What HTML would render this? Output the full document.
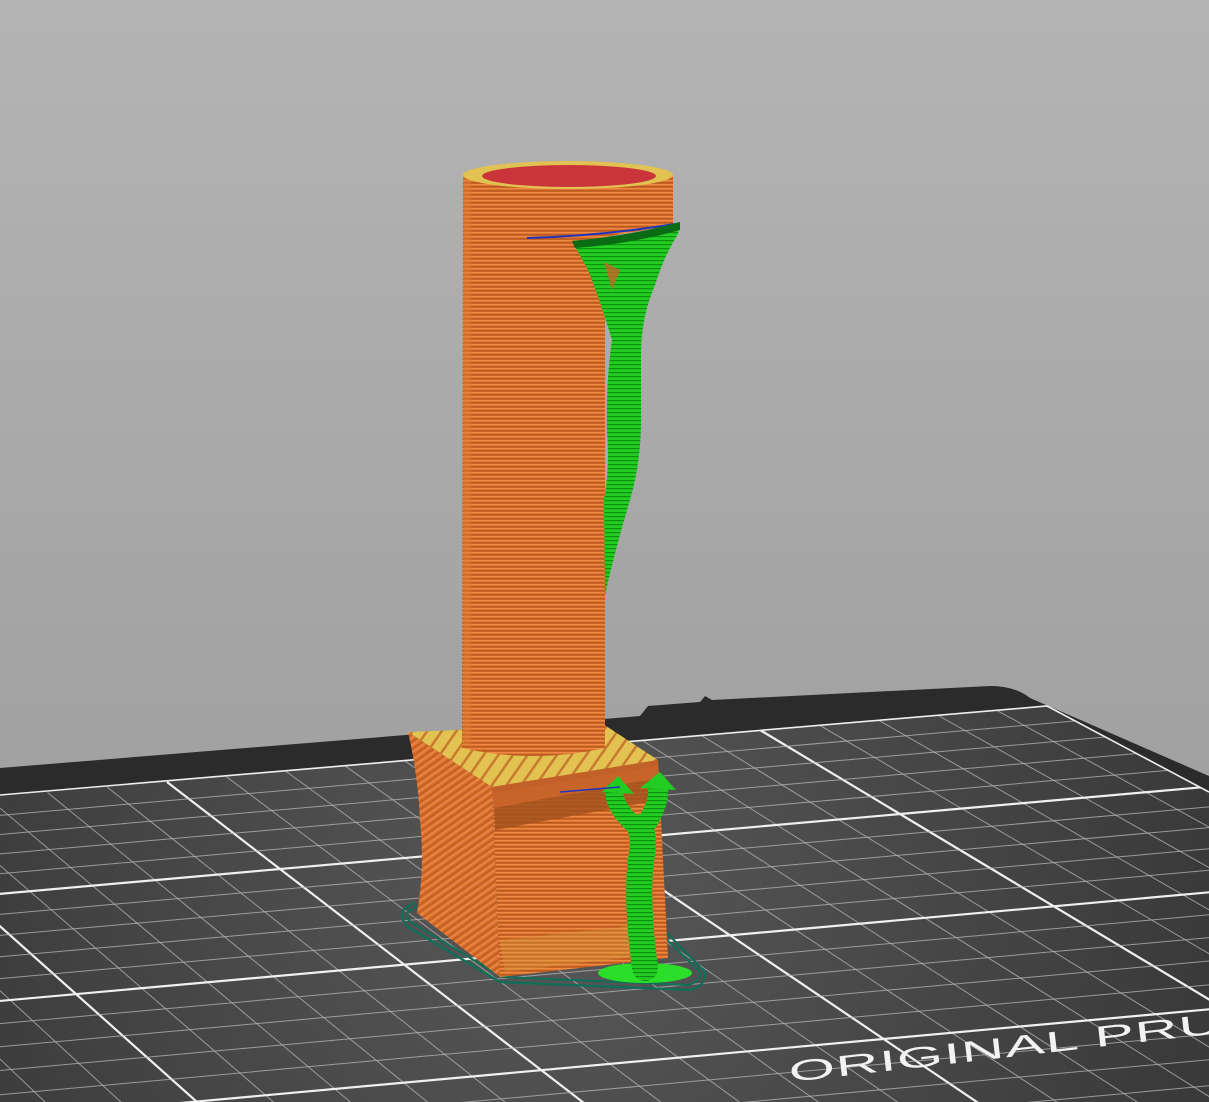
<!DOCTYPE html>
<html><head><meta charset="utf-8"><style>
html,body{margin:0;padding:0;width:1209px;height:1102px;overflow:hidden;background:#a8a8a8}
svg{display:block;overflow:hidden}
</style></head><body>
<svg id="s" width="1209" height="1102" viewBox="0 0 1209 1102" xmlns="http://www.w3.org/2000/svg">
<defs>
<linearGradient id="bg" x1="0" y1="0" x2="0" y2="1">
<stop offset="0" stop-color="#b4b4b4"/><stop offset="1" stop-color="#999"/>
</linearGradient>
<radialGradient id="bed" cx="560" cy="900" r="650" gradientUnits="userSpaceOnUse">
<stop offset="0" stop-color="#585858"/><stop offset="1" stop-color="#3a3a3a"/>
</radialGradient>
<pattern id="lay" width="8" height="4" patternUnits="userSpaceOnUse">
<rect width="8" height="4" fill="#d86d2a"/>
<rect y="0" width="8" height="1.3" fill="#ee8a42"/>
<rect y="2.4" width="8" height="1" fill="#ad521c"/>
</pattern>
<pattern id="lay2" width="6" height="6" patternUnits="userSpaceOnUse" patternTransform="rotate(-35)">
<rect width="6" height="6" fill="#d86d2c"/>
<rect width="6" height="1.5" fill="#ea8a44"/>
<rect y="3.5" width="6" height="1" fill="#b45820"/>
</pattern>
<pattern id="yel" width="12" height="12" patternUnits="userSpaceOnUse" patternTransform="rotate(35)">
<rect width="12" height="12" fill="#e2c250"/>
<rect width="2.5" height="12" fill="#c87a30"/>
</pattern>
<pattern id="grn" width="6" height="4" patternUnits="userSpaceOnUse">
<rect width="6" height="4" fill="#22cc22"/>
<rect width="6" height="1.2" fill="#0f8f10"/>
</pattern>
<clipPath id="gclip"><polygon points="0,795 1047,706 1209,792 1209,1102 0,1102"/></clipPath>
</defs>
<rect width="1209" height="1102" fill="url(#bg)"/>
<path d="M0,768 L640,716 L648,706 L700,702 L705,696 L712,700 L990,686 Q1015,686 1030,698 L1209,776 L1209,1102 L0,1102 Z" fill="#2b2b2b"/>
<polygon points="0,795 1047,706 1209,792 1209,1102 0,1102" fill="url(#bed)"/>
<g id="grid" clip-path="url(#gclip)"></g>
<polyline points="0,795 1047,706 1209,792" fill="none" stroke="#eee" stroke-width="1.6"/>
<text transform="translate(790,1082) rotate(-6.5) scale(2.05,1)" font-family="Liberation Sans, sans-serif" font-size="29" fill="#f2f2f2" letter-spacing="0.5">ORIGINAL PRUSA</text>

<path d="M415,902 L403,910 Q399,918 408,927 L500,982 L690,990 Q706,986 705,972 L662,928" fill="none" stroke="#0e6f58" stroke-width="2.2"/>
<path d="M417,906 L408,912 Q405,918 412,923 L502,977 L688,985 Q700,982 700,972 L660,933" fill="none" stroke="#0e6f58" stroke-width="2"/>

<path d="M408,732 L492,787 L500,977 L417,913 Q425,870 420,820 Q418,775 408,732 Z" fill="url(#lay2)"/>
<path d="M492,787 L658,760 L668,958 L500,977 Z" fill="url(#lay)"/>
<path d="M492,787 L658,760 L658,778 L494,808 Z" fill="#c8642a"/>
<path d="M494,808 L658,778 L660,800 L495,830 Z" fill="#a4521f" opacity="0.85"/>
<path d="M500,940 L640,925 L650,955 L505,972 Z" fill="#d8a040" opacity="0.35"/>
<path d="M408,732 L603,724 L658,760 L492,787 Z" fill="url(#yel)"/>
<path d="M492,787 L658,760 L658,766 L492,793 Z" fill="#c2602a"/>

<path d="M463,175 L673,175 L673,225 L605,237 L605,748 Q533,764 462,748 Z" fill="url(#lay)"/>
<rect x="463" y="175" width="8" height="570" fill="#e07a38" opacity="0.5"/>
<ellipse cx="568" cy="175" rx="105" ry="14" fill="#e1c252"/>
<ellipse cx="569" cy="176" rx="87" ry="11" fill="#c9353a"/>
<path d="M527,238 Q600,236 675,224" fill="none" stroke="#2233bb" stroke-width="2"/>

<path d="M572,241 Q630,236 680,222 L678,234 Q664,256 655,285 Q642,315 641,350 L641,410 Q642,460 630,500 Q615,550 605,595 L604,500 Q610,470 607,430 Q606,380 612,340 Q600,300 588,270 Z" fill="url(#grn)"/>
<path d="M572,241 Q630,236 680,222 L680,230 Q630,244 575,248 Z" fill="#0b6a14"/>
<path d="M604,262 L612,290 L620,270 Z" fill="#c96328" opacity="0.8"/>

<ellipse cx="645" cy="973" rx="47" ry="10" fill="#2ade2a"/>
<path d="M645,968 Q636,900 641,860 Q645,840 640,827" fill="none" stroke="url(#grn)" stroke-width="26" stroke-linecap="round"/>
<path d="M640,830 Q615,810 614,792" fill="none" stroke="url(#grn)" stroke-width="18" stroke-linecap="round"/>
<path d="M642,830 Q660,805 658,787" fill="none" stroke="url(#grn)" stroke-width="20" stroke-linecap="round"/>
<path d="M602,792 L618,776 L634,794 Z" fill="#22cc22"/>
<path d="M640,788 L660,772 L676,790 Z" fill="#22cc22"/>
<path d="M560,792 L620,787" stroke="#2233bb" stroke-width="1.5"/>
</svg>
<script>
(function(){
function solve(A,b){var n=b.length;for(var i=0;i<n;i++){var m=i;for(var k=i+1;k<n;k++)if(Math.abs(A[k][i])>Math.abs(A[m][i]))m=k;var t=A[i];A[i]=A[m];A[m]=t;var tb=b[i];b[i]=b[m];b[m]=tb;for(var k=i+1;k<n;k++){var f=A[k][i]/A[i][i];for(var j=i;j<n;j++)A[k][j]-=f*A[i][j];b[k]-=f*b[i];}}var x=new Array(n);for(var i=n-1;i>=0;i--){var s=b[i];for(var j=i+1;j<n;j++)s-=A[i][j]*x[j];x[i]=s/A[i][i];}return x;}
var src=[[0,0],[2,0],[0,1],[2,1]],dst=[[167,782],[760,730],[280,869],[900,814]];
var A=[],b=[];
for(var i=0;i<4;i++){var u=src[i][0],v=src[i][1],x=dst[i][0],y=dst[i][1];
A.push([u,v,1,0,0,0,-u*x,-v*x]);b.push(x);A.push([0,0,0,u,v,1,-u*y,-v*y]);b.push(y);}
var h=solve(A,b);
function P(u,v){var w=h[6]*u+h[7]*v+1;return [(h[0]*u+h[1]*v+h[2])/w,(h[3]*u+h[4]*v+h[5])/w];}
var g=document.getElementById('grid'),out='';
function line(a,c,major){out+='<line x1="'+a[0].toFixed(1)+'" y1="'+a[1].toFixed(1)+'" x2="'+c[0].toFixed(1)+'" y2="'+c[1].toFixed(1)+'" stroke="'+(major?'#f0f0f0':'#b8b8b8')+'" stroke-width="'+(major?2.2:1)+'" opacity="'+(major?1:0.75)+'"/>';}
for(var k=-40;k<=15;k++){var u=k/5;line(P(u,0),P(u,6),k%5===0);}
for(var k=1;k<=30;k++){var v=k/5;line(P(-10,v),P(3,v),k%5===0);}
g.innerHTML=out;
})();
</script>
</body></html>
